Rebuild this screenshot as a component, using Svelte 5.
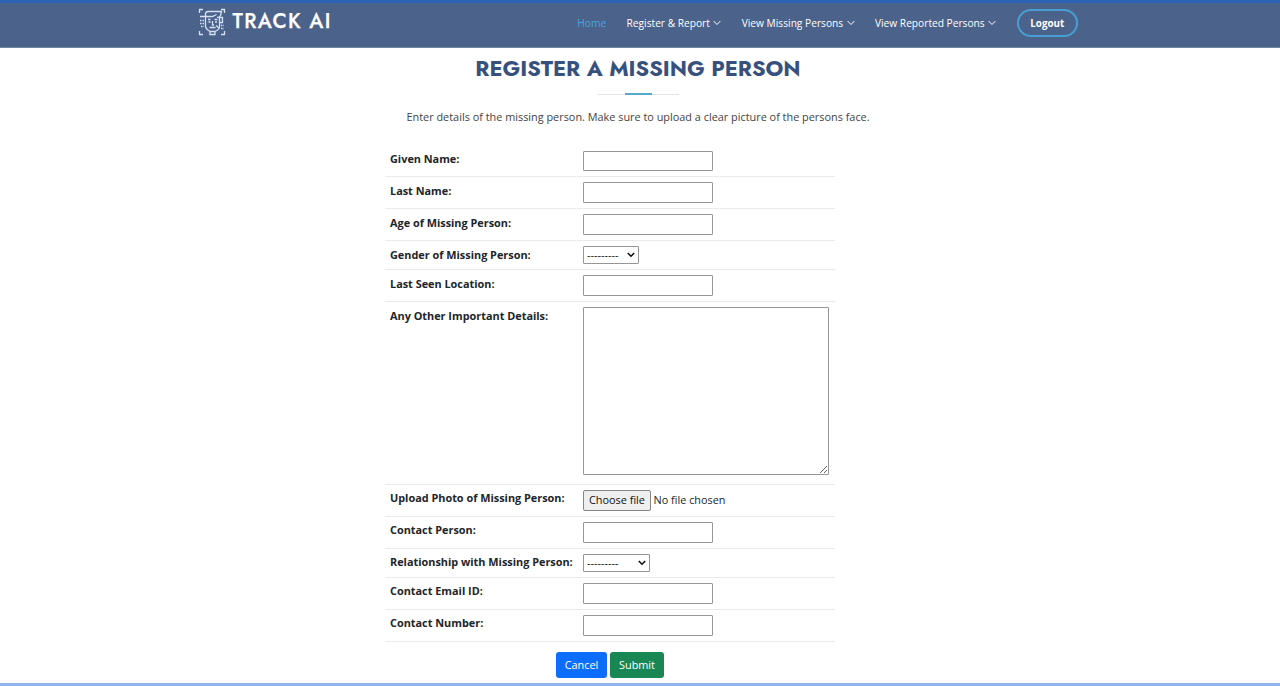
<script>
  const menus = ['Register & Report', 'View Missing Persons', 'View Reported Persons'];
  const rows = [
    { label: 'Given Name:', type: 'text', h: 32 },
    { label: 'Last Name:', type: 'text', h: 32 },
    { label: 'Age of Missing Person:', type: 'text', h: 32 },
    { label: 'Gender of Missing Person:', type: 'select', w: 56, h: 29 },
    { label: 'Last Seen Location:', type: 'text', h: 32 },
    { label: 'Any Other Important Details:', type: 'area', h: 183 },
    { label: 'Upload Photo of Missing Person:', type: 'file', h: 32 },
    { label: 'Contact Person:', type: 'text', h: 32 },
    { label: 'Relationship with Missing Person:', type: 'select', w: 67, h: 29 },
    { label: 'Contact Email ID:', type: 'text', h: 32 },
    { label: 'Contact Number:', type: 'text', h: 32 }
  ];
</script>

<div class="page">
  <header>
    <a class="brand" href="#top">
      <svg width="28" height="28" viewBox="0 0 28 28" fill="none" stroke="#d5e2f3" stroke-width="1.3">
        <path d="M1.5 5V1.5H5M23 1.5h3.500V5M26.500 23v3.500H23M5 26.500H1.500V23" />
        <path d="M7.500 8.500V5.500Q8 3.500 10 3.500H23.500L22.500 7.500Q21.500 9.500 19 9.500" />
        <path d="M2 8.500H14.500L18.500 6.500M7.500 8.500V18.500Q8 21 10.500 22.500L12.500 23.500H16.500L19 22.500Q21.500 21 21.500 18.500V9" />
        <path d="M21.500 9.500H24.500V14.500H21.500M12 24V26.500H17V24M11.500 19.500H17.500M14.500 13V17H16M18 17.500L21 20" />
        <path d="M10 11.500H12.500M16.500 11.500H19.500M10.500 14H12.500M17 14H19" />
        <path d="M2 12.500H6M2 15.500H6M3 18.500H6M23 17.500H26M23 20.500H26" stroke-dasharray="1.500 1" />
      </svg>
      <span>TRACK AI</span>
    </a>
    <nav>
      <a class="home" href="#home">Home</a>
      {#each menus as m}
        <a class="menu" href="#menu"><span>{m}</span><svg width="8" height="6" viewBox="0 0 8 6" fill="none" stroke="currentColor" stroke-width="1"><path d="M.6 1 4 4.5 7.4 1" /></svg></a>
      {/each}
      <a class="logout" href="#logout">Logout</a>
    </nav>
  </header>

  <main>
    <h1>REGISTER A MISSING PERSON</h1>
    <div class="rule"><i></i></div>
    <p>Enter details of the missing person. Make sure to upload a clear picture of the persons face.</p>

    <form>
      {#each rows as r, i}
        <div class="row" class:first={i === 0} class:late={i > 5} style="height:{r.h}px">
          <span class="label">{r.label}</span>
          {#if r.type === 'text'}
            <input type="text" aria-label={r.label} />
          {:else if r.type === 'area'}
            <textarea aria-label={r.label}></textarea>
          {:else if r.type === 'select'}
            <div class="select" style="width:{r.w}px">
              <span>---------</span>
              <svg width="8" height="6" viewBox="0 0 8 6" fill="none" stroke="#111" stroke-width="1.6"><path d="M.8 1 4 4.2 7.2 1" /></svg>
            </div>
          {:else}
            <div class="file"><button type="button">Choose file</button><span>No file chosen</span></div>
          {/if}
        </div>
      {/each}
    </form>
    <div class="actions">
      <button class="cancel" type="button">Cancel</button>
      <button class="submit" type="button">Submit</button>
    </div>
  </main>
  <footer></footer>
</div>

<style>
  :global(body) { background: #fff; overflow: hidden; }
  .page { height: 686px; display: flex; flex-direction: column; font-family: "Open Sans", sans-serif; font-size: 10.88px; color: #212529; }
  .page * { box-sizing: border-box; }
  a { text-decoration: none; color: #fff; }
  header { height: 48px; flex: none; background: #4b628b; border-top: 3px solid #2a62b4; border-bottom: 1px solid #7385a5; display: flex; justify-content: space-between; padding: 0 202px 0 198px; }
  .brand { display: flex; align-items: flex-start; padding-top: 5px; }
  .brand span { font-family: Jost, Lato, sans-serif; font-weight: 500; font-size: 20.4px; line-height: 26px; letter-spacing: 1.36px; margin-left: 6.500px; -webkit-text-stroke: 0.25px #fff; }
  nav { display: flex; align-items: center; height: 40px; font-size: 10.2px; font-weight: 500; white-space: nowrap; }
  .home { color: #47a6dc; margin-right: 20.4px; }
  .menu { display: flex; align-items: center; gap: 3.4px; margin-right: 20.4px; }
  .logout { width: 61.5px; height: 28px; border: 2px solid #469fd2; border-radius: 14px; display: flex; align-items: center; justify-content: center; font-weight: 700; font-size: 9.8px; }
  main { flex: 1; display: flex; flex-direction: column; }
  h1 { font-family: Jost, Lato, sans-serif; font-weight: 700; font-size: 21.76px; line-height: 28px; height: 28px; margin: 7px 4px 0 0; color: #37517e; align-self: center; white-space: nowrap; }
  .rule { width: 81px; height: 3px; margin: 10px 0 0 598px; display: flex; justify-content: center; background: linear-gradient(#fff 1px, #e4e4e4 1px, #e4e4e4 2px, #fff 2px); }
  .rule i { width: 27px; height: 2px; background: #55a8cc; }
  p { margin: 12px 0 0 406.500px; line-height: 18px; color: #444; white-space: nowrap; }
  form { margin: 19px 0 0 385px; width: 450px; }
  .row { display: grid; grid-template-columns: 193px 1fr; padding: 6px 5px 0; border-bottom: 1px solid #e8eaec; align-items: start; }
  .late { padding-top: 5px; }
  .label { font-weight: 700; line-height: 16px; white-space: nowrap; }
  input { appearance: none; width: 130px; height: 21px; border: 1px solid #969696; border-radius: 1px; background: #fff; outline: none; padding: 0; margin: -1px 0 0; }
  .late input { margin-top: 0; }
  .first input { height: 20px; margin-top: 0; }
  textarea { width: 246px; height: 168px; border: 1px solid #969696; border-radius: 1px; margin: -1px 0 0; padding: 2px; background: #fff; }
  .select { height: 18px; border: 1px solid #969696; border-radius: 1px; display: flex; align-items: center; justify-content: space-between; padding: 0 3px 0 3px; color: #111; }
  .select span { line-height: 12px; }
  .row:not(.late) .select { margin-top: -1px; }
  .file { display: flex; align-items: center; gap: 2.500px; line-height: 17px; }
  .file span { padding-bottom: 2px; }
  .file button { width: 68px; height: 21px; padding: 0 0 2px; border: 1px solid #858585; border-radius: 2px; background: #efefef; font: 10.88px "Open Sans", sans-serif; color: #111; white-space: nowrap; }
  .actions { display: flex; gap: 3px; margin: 10px 0 0 556px; }
  .actions button { border: 0; border-radius: 3px; height: 26px; padding: 0 0 1px; color: #fff; font: 10.88px "Open Sans", sans-serif; }
  .cancel { width: 51px; background: #0d6efd; }
  .submit { width: 54px; background: #198754; }
  footer { height: 3px; flex: none; background: #8fb5ea; }
</style>
